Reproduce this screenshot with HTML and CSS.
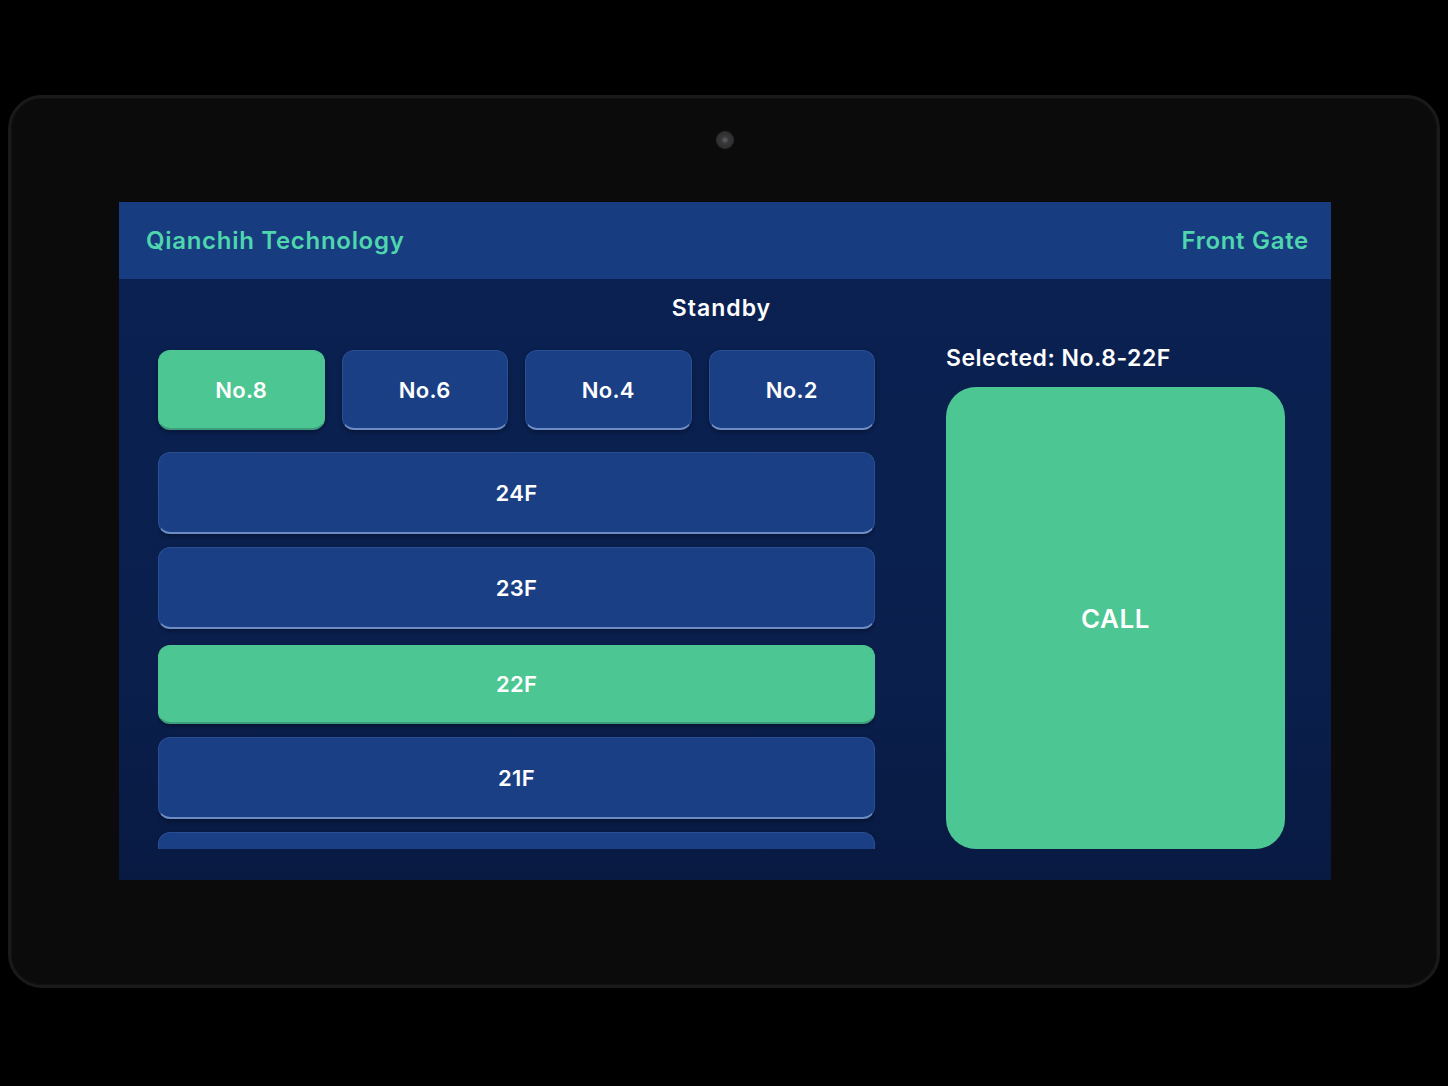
FILE: index.html
```html
<!DOCTYPE html>
<html>
<head>
    <title>Qianchih Technology - Front Gate</title>
    <link rel="stylesheet" href="styles.css">
</head>
<body>
    <div class="device">
        <div class="camera"></div>
        <div class="screen">
            <header class="topbar">
                <span class="brand">Qianchih Technology</span>
                <span class="place">Front Gate</span>
            </header>
            <main class="panel">
                <div class="status">Standby</div>
                <div class="layout">
                    <div class="left">
                        <div class="tabs">
                            <button class="tab active">No.8</button>
                            <button class="tab">No.6</button>
                            <button class="tab">No.4</button>
                            <button class="tab">No.2</button>
                        </div>
                        <div class="floors">
                            <button class="floor">24F</button>
                            <button class="floor">23F</button>
                            <button class="floor active">22F</button>
                            <button class="floor">21F</button>
                            <!-- next floor is scrolled below the fold -->
                            <button class="floor" aria-label="20F"></button>
                        </div>
                    </div>
                    <div class="right">
                        <div class="selected">Selected: No.8-22F</div>
                        <button class="call">CALL</button>
                    </div>
                </div>
            </main>
        </div>
    </div>
</body>
</html>
```
FILE: styles.css
```css
body {
    margin: 0;
    padding: 0;
    background-color: #000;
    font-family: Inter, "Noto Sans", sans-serif;
}
.device {
    box-sizing: border-box;
    margin: 95px 8px 0 8px;
    width: 1432px;
    height: 893px;
    border: 3px solid #1a1a1c;
    border-radius: 34px;
    background-color: #0b0b0c;
    padding: 33px 0 0 2px;
    display: flex;
    flex-direction: column;
    align-items: center;
    box-shadow: inset 0 0 0 1px #111;
}
.camera {
    width: 18px;
    height: 18px;
    border-radius: 50%;
    background: radial-gradient(circle, #555 0 2px, #3a3a3c 3px, #2c2c2e 9px);
}
.screen {
    margin-top: 53px;
    width: 1212px;
    height: 678px;
    display: flex;
    flex-direction: column;
    background: linear-gradient(180deg, #0a2152 0%, #0a1f4c 70%, #081a42 100%);
}
.topbar {
    height: 77px;
    flex-shrink: 0;
    background-color: #173c80;
    display: flex;
    align-items: center;
    justify-content: space-between;
    padding: 0 22px 0 27px;
    color: #4fd6ad;
    font-size: 24px;
    font-weight: 600;
    letter-spacing: 0.7px;
}
.panel {
    flex: 1;
    display: flex;
    flex-direction: column;
    padding: 15px 46px 31px 39px;
    min-height: 0;
}
.status {
    text-align: center;
    color: #fff;
    font-size: 23px;
    font-weight: 600;
    line-height: 28px;
    letter-spacing: 1px;
}
.layout {
    flex: 1;
    margin-top: 22px;
    display: grid;
    grid-template-columns: 717px 339px;
    column-gap: 71px;
    min-height: 0;
}
.left {
    padding-top: 6px;
    display: flex;
    flex-direction: column;
    min-height: 0;
}
.tabs {
    display: grid;
    grid-template-columns: repeat(4, 1fr);
    column-gap: 17px;
}
button {
    font-family: inherit;
    color: #fff;
    font-weight: 600;
    cursor: pointer;
}
.tab, .floor {
    background-color: #1a3f85;
    border: 1px solid #2b4f93;
    border-bottom: 2px solid #6d8cc4;
    border-radius: 12px;
    font-size: 22px;
    letter-spacing: 0.3px;
    box-shadow: 0 2px 4px rgba(0, 0, 0, 0.35);
}
.tab {
    height: 80px;
}
.tab.active, .floor.active {
    background-color: #4cc692;
    border-color: #4cc692;
    border-bottom-color: #3d9d7c;
}
.floors {
    margin-top: 22px;
    flex: 1;
    min-height: 0;
    overflow: hidden;
    display: flex;
    flex-direction: column;
    gap: 13px;
}
.floor {
    height: 82px;
    flex-shrink: 0;
}
.floor.active {
    height: 79px;
    margin-top: 3px;
}
.right {
    display: flex;
    flex-direction: column;
}
.selected {
    color: #fff;
    font-size: 23px;
    font-weight: 600;
    line-height: 28px;
    letter-spacing: 0.5px;
}
.call {
    margin-top: 15px;
    flex: 1;
    border: none;
    border-radius: 30px;
    background-color: #4cc692;
    font-size: 26px;
    letter-spacing: 0.5px;
    padding-right: 6px;
}
```
